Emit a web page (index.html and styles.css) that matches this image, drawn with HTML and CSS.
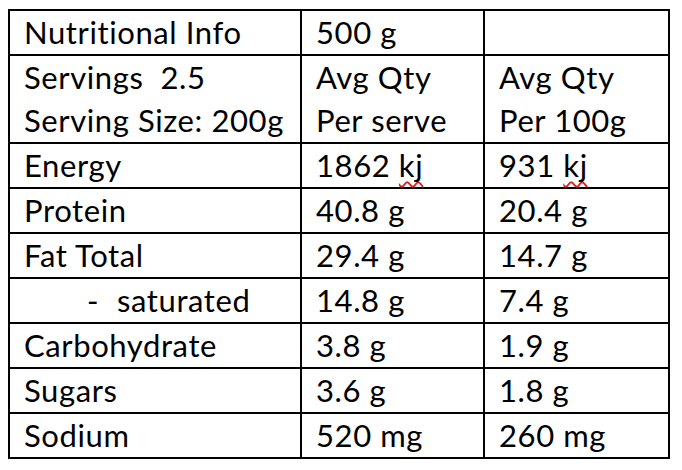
FILE: index.html
```html
<!DOCTYPE html>
<html lang="en">
<head>
<meta charset="utf-8">
<title>Nutritional Info</title>
<link rel="stylesheet" href="styles.css">
</head>
<body>
<table class="nutrition">
  <colgroup>
    <col class="col-name">
    <col class="col-serve">
    <col class="col-100">
  </colgroup>
  <tbody>
    <tr><td>Nutritional Info</td><td>500 g</td><td></td></tr>
    <tr>
      <td><div>Servings&nbsp; 2.5</div><div>Serving Size: 200g</div></td>
      <td><div>Avg Qty</div><div>Per serve</div></td>
      <td><div>Avg Qty</div><div>Per 100g</div></td>
    </tr>
    <tr><td>Energy</td><td>1862 <span class="spell">kj</span></td><td>931 <span class="spell">kj</span></td></tr>
    <tr><td>Protein</td><td>40.8 g</td><td>20.4 g</td></tr>
    <tr><td>Fat Total</td><td>29.4 g</td><td>14.7 g</td></tr>
    <tr><td><span class="dash">-</span><span>saturated</span></td><td>14.8 g</td><td>7.4 g</td></tr>
    <tr><td>Carbohydrate</td><td>3.8 g</td><td>1.9 g</td></tr>
    <tr><td>Sugars</td><td>3.6 g</td><td>1.8 g</td></tr>
    <tr><td>Sodium</td><td>520 mg</td><td>260 mg</td></tr>
  </tbody>
</table>
</body>
</html>
```

FILE: styles.css
```css
html, body {
  background: #ffffff;
}
body {
  margin: 9px 8px;
  font-family: "Lato", "Open Sans", sans-serif;
  color: #000000;
}
.nutrition {
  border-collapse: collapse;
  table-layout: fixed;
  width: 662px;
}
.col-name { width: 292px; }
.col-serve { width: 183px; }
.col-100 { width: 185px; }
.nutrition td {
  border: 2px solid #000000;
  padding: 0 13px 0 14px;
  font-size: 31px;
  font-weight: 400;
  letter-spacing: 0.6px;
  line-height: 43px;
  vertical-align: top;
  white-space: nowrap;
}
.spell {
  text-decoration: underline wavy #e02020;
  text-decoration-thickness: 1.5px;
  text-decoration-skip-ink: none;
  text-underline-offset: 4px;
}
.dash {
  display: inline-block;
  margin-left: 63px;
  width: 30px;
}
```
